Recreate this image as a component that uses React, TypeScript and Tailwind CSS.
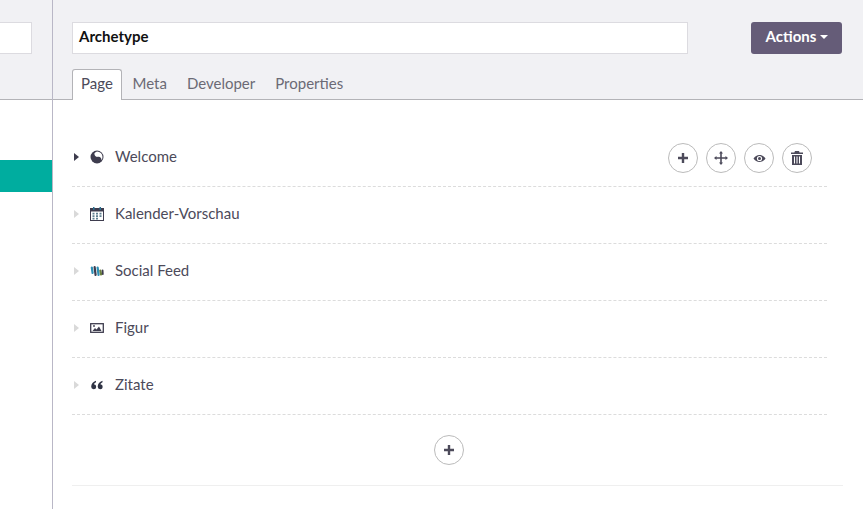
import type { ReactNode } from 'react'

const ink = '#3e3c4e'

function Yin() {
  return (
    <svg width="14" height="14" viewBox="0 0 14 14" className="block">
      <circle cx="7" cy="7" r="6.500" fill={ink} />
      <path d="M7 1.500A5.500 5.500 0 0 1 12.500 7 5.500 5.500 0 0 1 11.400 10.300C11.700 7.500 9.800 6.300 7.800 6.800 5.800 7.300 4.300 5.800 4.400 3.300A5.500 5.500 0 0 1 7 1.500z" fill="#fff" />
    </svg>
  )
}

function Calendar() {
  return (
    <svg width="14" height="14" viewBox="0 0 14 14" className="block">
      <rect x="0.500" y="1.500" width="13" height="12" fill="#fff" stroke={ink} />
      <rect x="1" y="2" width="12" height="2.500" fill={ink} />
      <rect x="3" y="0" width="1.500" height="3" fill="#2c6f8f" />
      <rect x="9.500" y="0" width="1.500" height="3" fill="#2c6f8f" />
      <path d="M2.500 5.800h2v1.600h-2zM6 5.800h2v1.600H6zM9.500 5.800h2v1.600h-2zM2.500 8.300h2v1.600h-2zM6 8.300h2v1.600H6zM9.500 8.300h2v1.600h-2zM6 10.800h2v1.600H6zM2.500 10.800h2v1.600h-2z" fill="#5f7f90" />
    </svg>
  )
}

function Feed() {
  return (
    <svg width="14" height="14" viewBox="0 0 14 14" className="block" fill="none" strokeLinecap="round">
      <path d="M1.800 3.500l.8 5.500" stroke="#2c8fb5" strokeWidth="2.200" />
      <path d="M4.600 3l1 8" stroke={ink} strokeWidth="2.200" />
      <path d="M7.600 3.500l1 7.500" stroke="#2c8fb5" strokeWidth="2.200" />
      <path d="M10.300 6.500l.8 4" stroke="#6a7f3c" strokeWidth="2.200" />
      <path d="M12.600 6.500l.2 3.500" stroke={ink} strokeWidth="1.800" />
    </svg>
  )
}

function Picture() {
  return (
    <svg width="14" height="14" viewBox="0 0 14 14" className="block">
      <rect x="0.700" y="2.700" width="12.600" height="8.600" fill="#fff" stroke={ink} strokeWidth="1.300" />
      <path d="M2.500 10l2.500-3 1.500 1.500L9 5.500l2.500 4.500z" fill={ink} />
      <circle cx="4" cy="5" r="0.900" fill={ink} />
    </svg>
  )
}

function Quote() {
  return (
    <svg width="14" height="14" viewBox="0 0 14 14" className="block" fill="#2f3344">
      <path d="M6 2.800C3 3.800 1.200 6 1.200 8.800a2.500 2.500 0 1 0 2.700-2.500c.2-.8 1-1.500 2.100-2z" />
      <path d="M12.500 2.800C9.500 3.800 7.700 6 7.700 8.800a2.500 2.500 0 1 0 2.700-2.500c.2-.8 1-1.500 2.100-2z" />
    </svg>
  )
}

function Caret({ on }: { on?: boolean }) {
  return <span className={`w-0 h-0 border-y-[4px] border-y-transparent border-l-[5px] ${on ? 'border-l-[#3e3c4e]' : 'border-l-[#d9d9d9]'}`} />
}

function Plus() {
  return (
    <svg width="12" height="12" viewBox="0 0 12 12" fill="#4c4a5a">
      <path d="M4.800 1h2.400v3.800H11v2.400H7.200V11H4.800V7.200H1V4.800h3.800z" />
    </svg>
  )
}

function Move() {
  return (
    <svg width="14" height="14" viewBox="0 0 14 14" fill="#4c4a5a">
      <path d="M7 0l2 2.500H7.800v3.700h3.700V5L14 7l-2.500 2V7.800H7.800v3.700H9L7 14l-2-2.500h1.200V7.800H2.500V9L0 7l2.500-2v1.200h3.700V2.500H5z" />
    </svg>
  )
}

function Eye() {
  return (
    <svg width="13" height="13" viewBox="0 0 13 13">
      <path d="M0.500 6.500C2 4.200 4 3 6.500 3s4.500 1.200 6 3.500C11 8.800 9 10 6.500 10S2 8.800.5 6.500z" fill="#4c4a5a" />
      <circle cx="6.500" cy="6.500" r="2.600" fill="#fff" />
      <circle cx="6.500" cy="6.500" r="1.500" fill="#4c4a5a" />
    </svg>
  )
}

function Trash() {
  return (
    <svg width="12" height="14" viewBox="0 0 12 14" fill="#4c4a5a">
      <path d="M4 0h4l.6 1.500H12V3H0V1.500h3.400z" />
      <path d="M1 4h10v10H1zM3 5.500V12.500h1V5.500zM5.500 5.500V12.500h1V5.500zM8 5.500V12.500h1V5.500z" fillRule="evenodd" />
    </svg>
  )
}

function RoundBtn({ children }: { children: ReactNode }) {
  return (
    <div className="w-[30px] h-[30px] rounded-full border border-[#bbbbbb] bg-white flex items-center justify-center">
      {children}
    </div>
  )
}

function Row({ icon, label, on, children }: { icon: ReactNode; label: string; on?: boolean; children?: ReactNode }) {
  return (
    <div className="h-[57px] flex items-center border-b border-dashed border-[#dcdcdc] pb-[2px]">
      <div className="w-[18px] flex items-center pl-[2px]">
        <Caret on={on} />
      </div>
      <div className="w-[25px] flex items-center">{icon}</div>
      <span className="text-[15px] text-[#4c4a5a] mb-[2px]">{label}</span>
      {children && <div className="ml-auto mr-[15px] mt-[2px] flex gap-2">{children}</div>}
    </div>
  )
}

const tabs = ['Meta', 'Developer', 'Properties']

export default function App() {
  return (
    <div className="h-[509px] w-[863px] overflow-hidden flex bg-white text-[15px] [font-family:Lato,sans-serif]">
      <div className="w-[53px] shrink-0 border-r border-[#b9b7c6]">
        <div className="h-[100px] bg-[#f1f1f4] border-b border-[#b3b3b7] pt-[22px]">
          <div className="h-[32px] w-[32px] bg-white border border-l-0 border-[#dcdbe0]" />
        </div>
        <div className="mt-[60px] h-[32px] bg-[#00ad9f]" />
      </div>

      <div className="flex-1 min-w-0">
        <div className="h-[100px] bg-[#f1f1f4] border-b border-[#b3b3b7] pl-[19px] pr-[21px] pt-[22px]">
          <div className="flex justify-between">
            <div className="w-[616px] h-[32px] bg-white border border-[#dcdbe0] px-[6px] pb-[4px] flex items-center font-bold text-[#111111]">
              Archetype
            </div>
            <div className="w-[91px] h-[32px] rounded-[3px] bg-[#655c78] text-white font-bold pb-[4px] pl-[1px] flex items-center justify-center gap-[4px]">
              Actions
              <span className="w-0 h-0 mt-[2px] border-x-[4px] border-x-transparent border-t-[4px] border-t-white" />
            </div>
          </div>
          <div className="flex mt-[15px] h-[31px]">
            <div className="w-[50px] h-[31px] bg-white border border-b-0 border-[#b3b3b7] rounded-t-[3px] pb-[4px] flex items-center justify-center text-[#4c4a5a]">
              Page
            </div>
            <div className="flex ml-[0.5px]">
              {tabs.map((t) => (
                <div key={t} className="px-[10px] pb-[2px] flex items-center text-[#6b6a75]">
                  {t}
                </div>
              ))}
            </div>
          </div>
        </div>

        <div className="pl-[19px] pr-[20px] pt-[30px]">
          <div className="pr-[16px]">
            <Row icon={<Yin />} label="Welcome" on>
              <RoundBtn><Plus /></RoundBtn>
              <RoundBtn><Move /></RoundBtn>
              <RoundBtn><Eye /></RoundBtn>
              <RoundBtn><Trash /></RoundBtn>
            </Row>
            <Row icon={<Calendar />} label="Kalender-Vorschau" />
            <Row icon={<Feed />} label="Social Feed" />
            <Row icon={<Picture />} label="Figur" />
            <Row icon={<Quote />} label="Zitate" />
            <div className="h-[70px] flex items-center justify-center pr-[2px] pb-[1px]">
              <RoundBtn><Plus /></RoundBtn>
            </div>
          </div>
          <div className="border-t border-[#efefef]" />
        </div>
      </div>
    </div>
  )
}
